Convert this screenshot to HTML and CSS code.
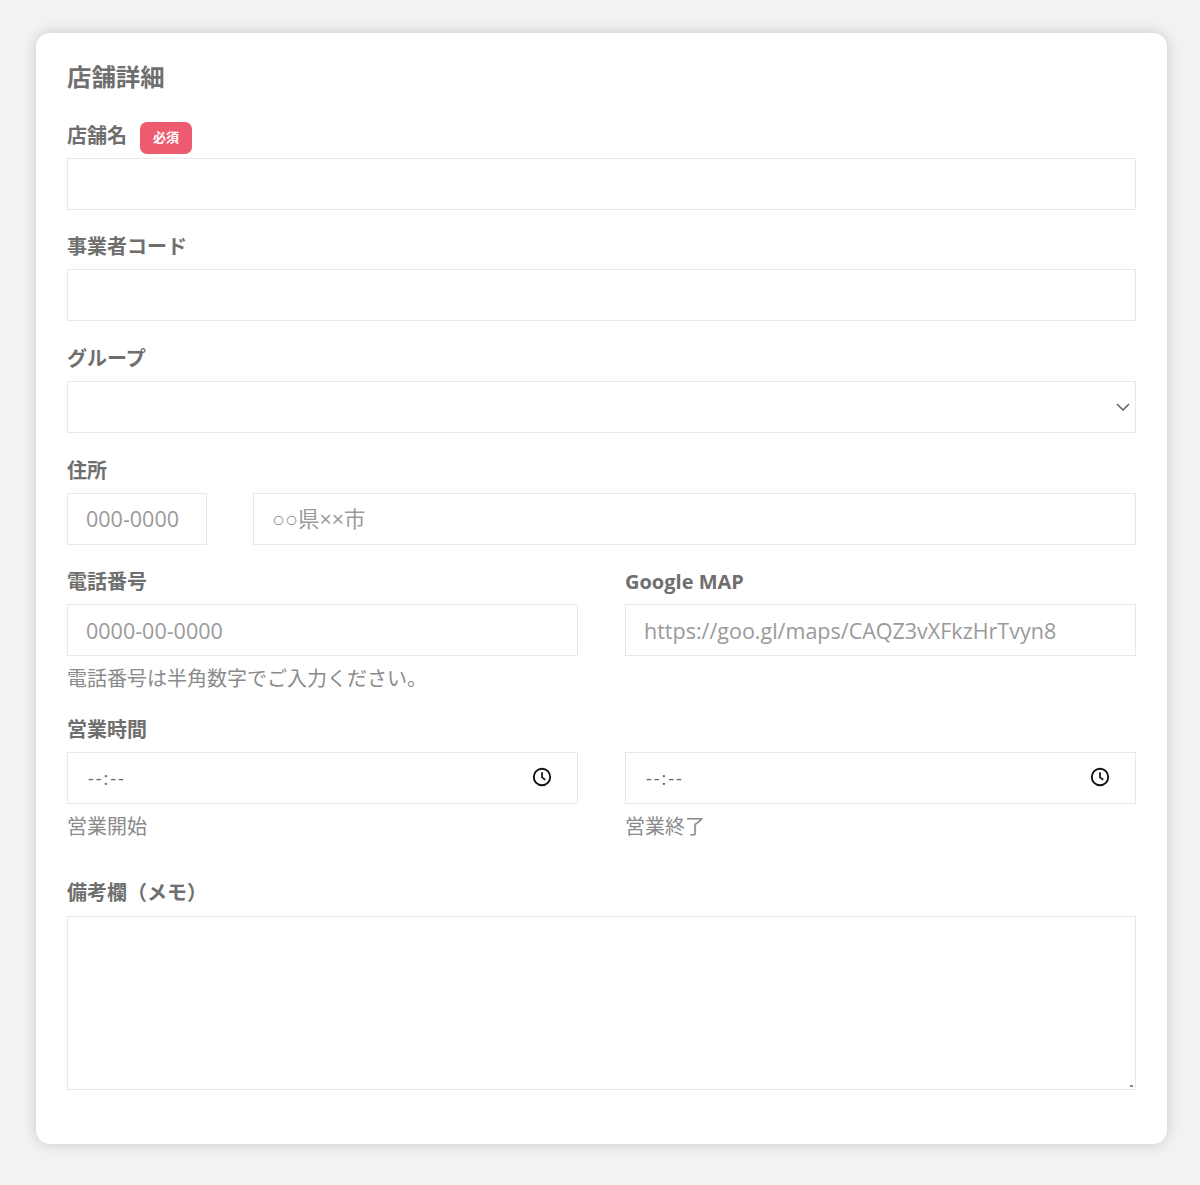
FILE: index.html
```
<!DOCTYPE html>
<html lang="ja">
<head>
<meta charset="utf-8">
<title>店舗詳細</title>
<link rel="stylesheet" href="styles.css">
</head>
<body>
<main class="card">
  <h2 class="title">店舗詳細</h2>
  <div class="group first">
    <div class="label-row"><label class="label">店舗名</label><span class="badge">必須</span></div>
    <input class="field" type="text">
  </div>
  <div class="group">
    <div class="label-row"><label class="label">事業者コード</label></div>
    <input class="field" type="text">
  </div>
  <div class="group">
    <div class="label-row"><label class="label">グループ</label></div>
    <div class="field select">
      <svg class="chevron" width="14" height="8" viewBox="0 0 14 8"><path d="M1 1l6 6 6-6" fill="none" stroke="#666" stroke-width="1.6"/></svg>
    </div>
  </div>
  <div class="group">
    <div class="label-row"><label class="label">住所</label></div>
    <div class="address">
      <input class="field" type="text" placeholder="000-0000">
      <input class="field" type="text" placeholder="○○県××市">
    </div>
  </div>
  <div class="cols">
    <div class="group">
      <div class="label-row"><label class="label">電話番号</label></div>
      <input class="field" type="text" placeholder="0000-00-0000">
      <p class="hint">電話番号は半角数字でご入力ください。</p>
    </div>
    <div class="group">
      <div class="label-row"><label class="label latin">Google MAP</label></div>
      <input class="field" type="text" placeholder="https://goo.gl/maps/CAQZ3vXFkzHrTvyn8">
    </div>
  </div>
  <div class="group hours">
    <div class="label-row"><label class="label">営業時間</label></div>
    <div class="cols inner">
      <div>
        <div class="time">
          <input class="field time-input" type="text" placeholder="--:--">
          <svg class="clock" width="20" height="20" viewBox="0 0 20 20"><circle cx="10" cy="10" r="8.2" fill="none" stroke="#111" stroke-width="1.9"/><path d="M10 5.2V10.4l3.2 2.4" fill="none" stroke="#111" stroke-width="1.7"/></svg>
        </div>
        <p class="hint">営業開始</p>
      </div>
      <div>
        <div class="time">
          <input class="field time-input" type="text" placeholder="--:--">
          <svg class="clock" width="20" height="20" viewBox="0 0 20 20"><circle cx="10" cy="10" r="8.2" fill="none" stroke="#111" stroke-width="1.9"/><path d="M10 5.2V10.4l3.2 2.4" fill="none" stroke="#111" stroke-width="1.7"/></svg>
        </div>
        <p class="hint">営業終了</p>
      </div>
    </div>
  </div>
  <div class="group memo">
    <div class="label-row"><label class="label">備考欄（メモ）</label></div>
    <div class="area-wrap">
      <textarea class="field area"></textarea>
      <span class="grip"></span>
    </div>
  </div>
</main>
</body>
</html>
```
FILE: styles.css
```
* { box-sizing: border-box; }
html, body { margin: 0; }
body {
  background: #f2f2f2;
  padding: 33px 33px 41px 36px;
  font-family: "Open Sans", "Liberation Sans", "Noto Sans CJK JP", sans-serif;
  color: #6f6f6f;
}
.card {
  background: #fff;
  border-radius: 14px;
  box-shadow: 0 0 14px rgba(0, 0, 0, .17);
  height: 1111px;
  padding: 27px 31px 0;
}
.title {
  margin: 0 0 25.75px;
  font-size: 24.4px;
  line-height: 34px;
  font-weight: 700;
  color: #6f6f6f;
}
.group { margin-top: 21.6px; }
.group.first { margin-top: 0; }
.label-row {
  display: flex;
  align-items: center;
  height: 38px;
  padding-bottom: 6px;
}
.label {
  font-size: 20px;
  line-height: 30px;
  font-weight: 700;
  color: #6f6f6f;
}
.badge {
  align-self: flex-start;
  margin: 2px 0 0 13px;
  width: 52px;
  height: 32px;
  border-radius: 7px;
  background: #ee5a6e;
  color: #fff;
  font-size: 13px;
  font-weight: 700;
  line-height: 30px;
  text-align: center;
}
.field {
  display: block;
  width: 100%;
  height: 52px;
  margin: 0;
  padding: 0 18px;
  background: #fff;
  border: 1px solid #e8e8e8;
  border-radius: 0;
  outline: 0;
  font-family: inherit;
  font-size: 21.5px;
  color: #6f6f6f;
}
.field::placeholder { color: #9a9a9a; opacity: 1; }
.select { position: relative; }
.chevron { position: absolute; right: 5px; top: 21px; }
.address {
  display: grid;
  grid-template-columns: 140px 1fr;
  column-gap: 46px;
}
.cols {
  display: grid;
  grid-template-columns: 511px 511px;
  column-gap: 47px;
}
.hint {
  margin: 8px 0 0;
  font-size: 20px;
  line-height: 30px;
  color: #8a8a8a;
}
.cols > .group { margin-top: 21.6px; }
.hours { margin-top: 19.9px; }
.time { position: relative; }
.time-input { font-size: 18px; padding: 0 20px; letter-spacing: 2px; }
.time-input::placeholder { color: #666; }
.clock { position: absolute; right: 26px; top: 15px; }
.memo { margin-top: 36px; }
.memo .label-row { padding-bottom: 8px; }
.area-wrap { position: relative; }
.area {
  height: 174px;
  padding: 10px 18px;
  resize: none;
}
.grip {
  position: absolute;
  right: 3px;
  bottom: 3px;
  width: 3px;
  height: 2px;
  background: #888;
}
```
